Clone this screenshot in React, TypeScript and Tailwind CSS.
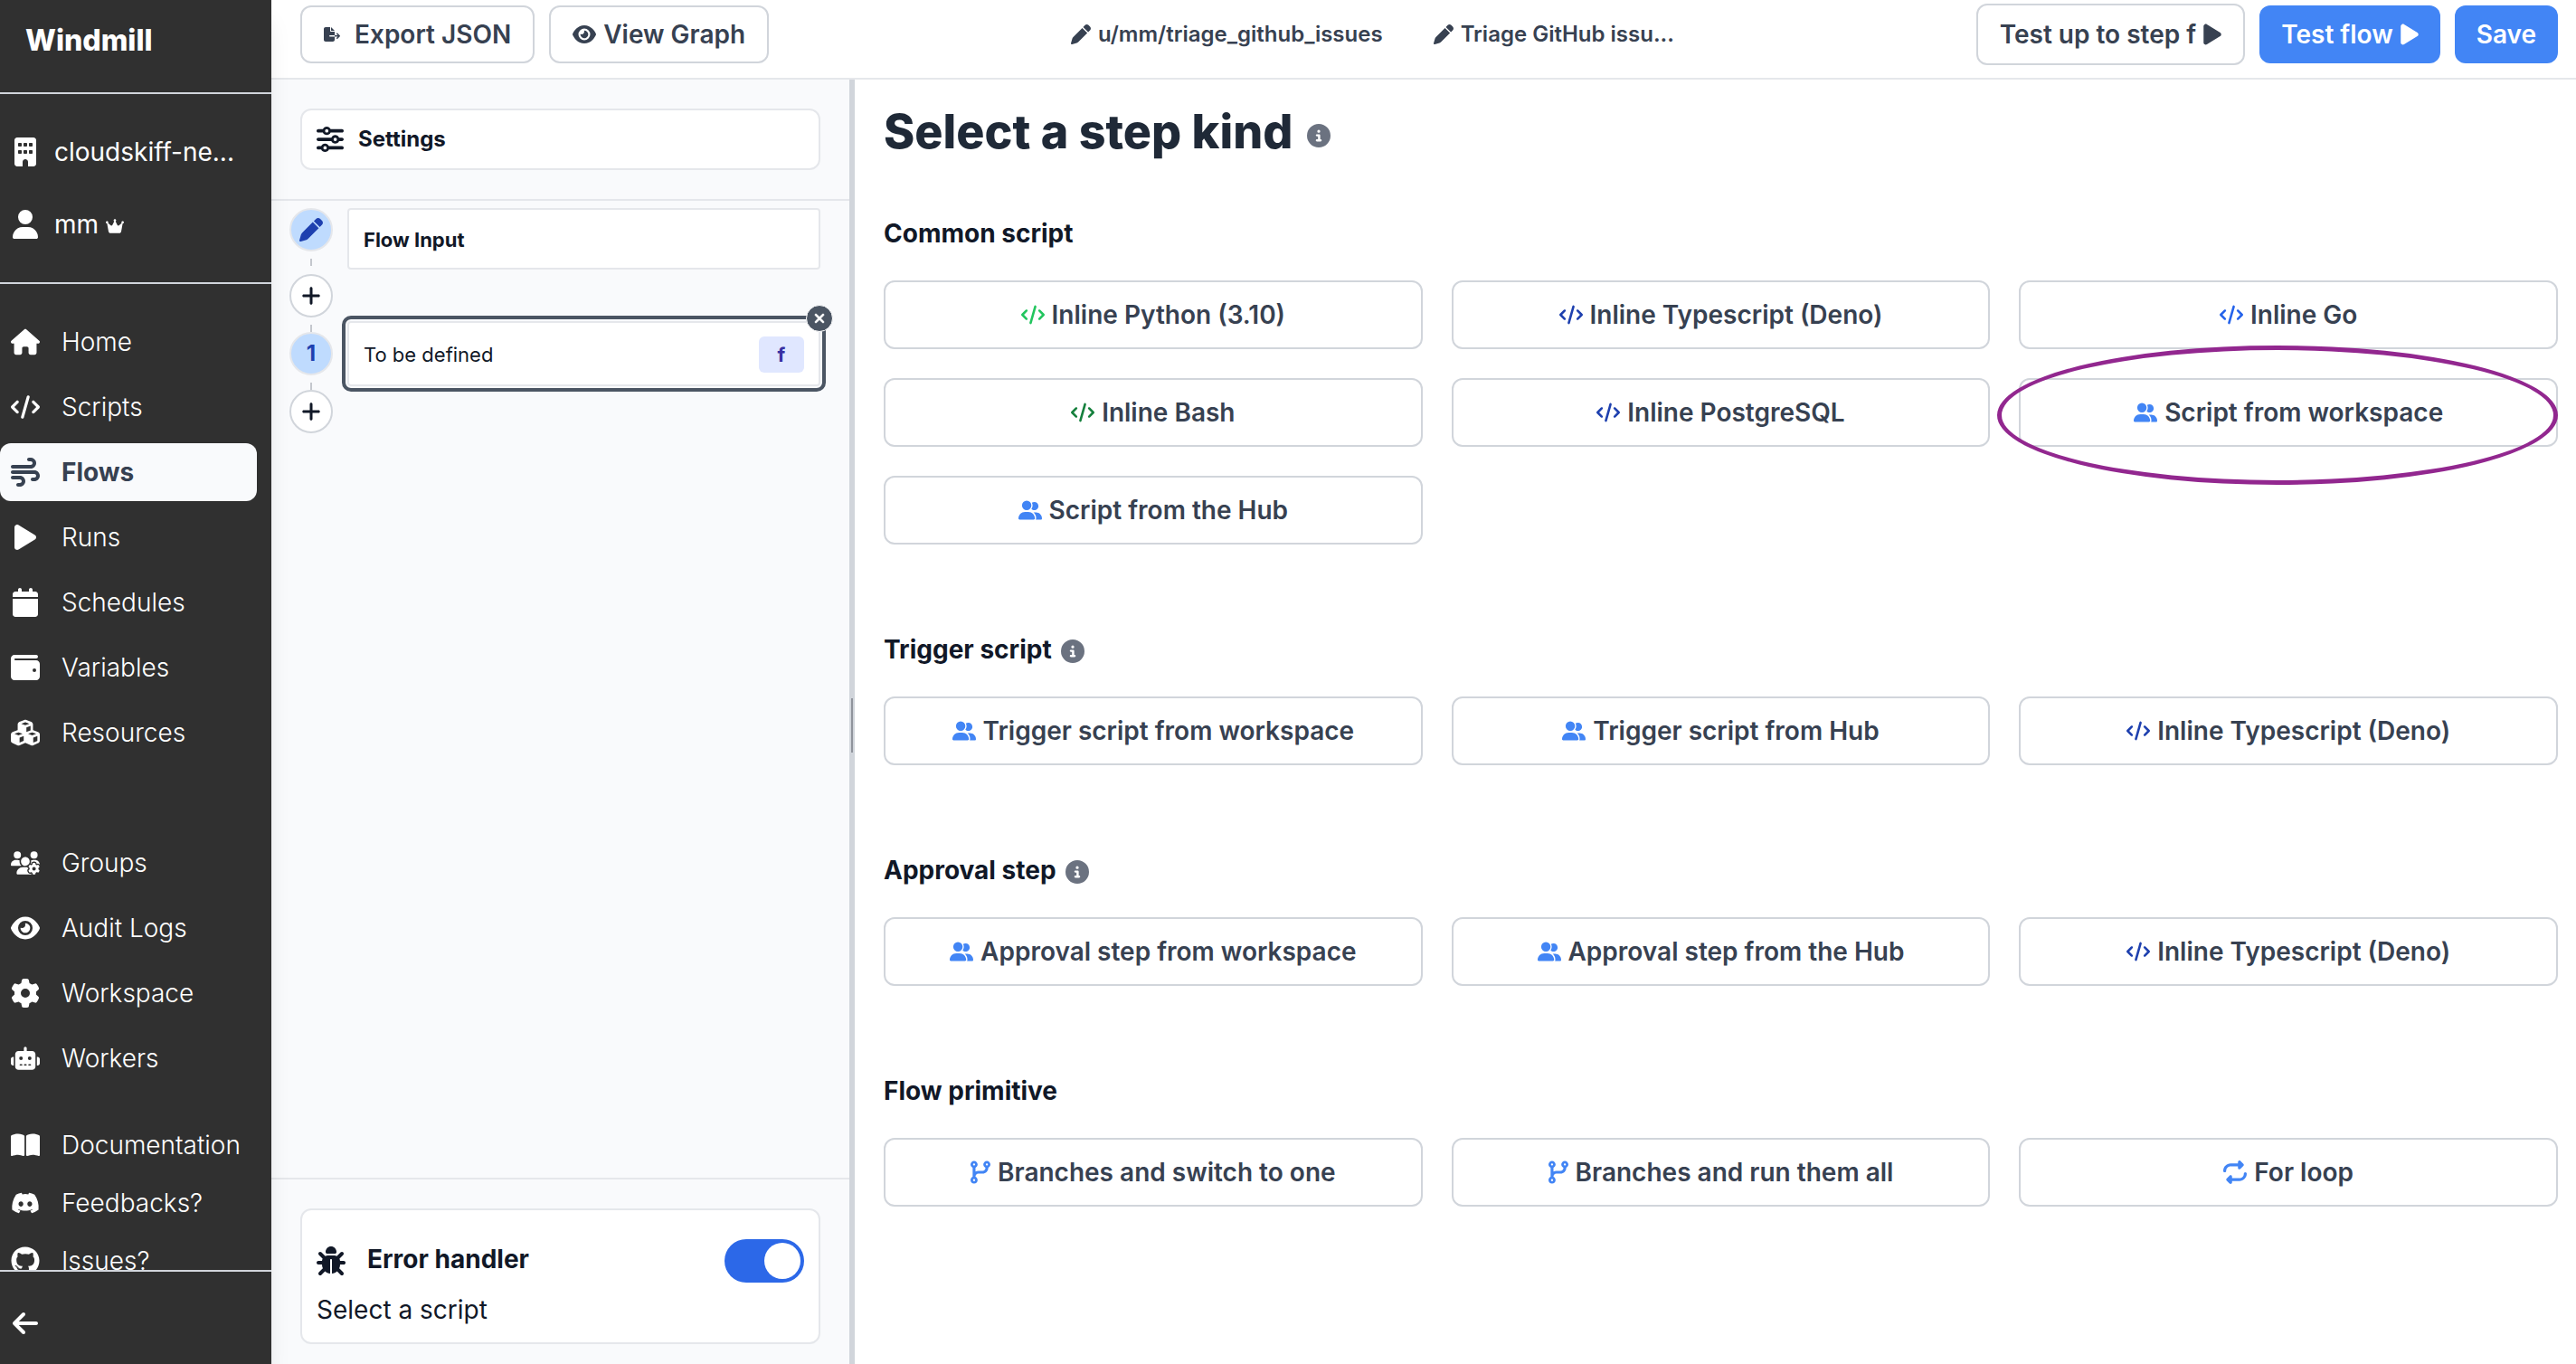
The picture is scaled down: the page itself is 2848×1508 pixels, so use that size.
import React from "react";
import type { IconType } from "react-icons";
import {
  FaArrowLeft,
  FaBookOpen,
  FaBug,
  FaBuilding,
  FaCalendar,
  FaCircleInfo,
  FaCode,
  FaCodeBranch,
  FaCrown,
  FaCubes,
  FaDiscord,
  FaEye,
  FaFileExport,
  FaGear,
  FaGithub,
  FaHouse,
  FaPen,
  FaPlay,
  FaPlus,
  FaRepeat,
  FaRobot,
  FaSliders,
  FaUser,
  FaUserGroup,
  FaUsersGear,
  FaWallet,
  FaWind,
  FaXmark,
} from "react-icons/fa6";

type NavEntry = { label: string; icon: IconType; active?: boolean };

const mainNav: NavEntry[] = [
  { label: "Home", icon: FaHouse },
  { label: "Scripts", icon: FaCode },
  { label: "Flows", icon: FaWind, active: true },
  { label: "Runs", icon: FaPlay },
  { label: "Schedules", icon: FaCalendar },
  { label: "Variables", icon: FaWallet },
  { label: "Resources", icon: FaCubes },
];

const adminNav: NavEntry[] = [
  { label: "Groups", icon: FaUsersGear },
  { label: "Audit Logs", icon: FaEye },
  { label: "Workspace", icon: FaGear },
  { label: "Workers", icon: FaRobot },
];

const helpNav: NavEntry[] = [
  { label: "Documentation", icon: FaBookOpen },
  { label: "Feedbacks?", icon: FaDiscord },
  { label: "Issues?", icon: FaGithub },
];

function NavLink({ entry }: { entry: NavEntry }) {
  const Icon = entry.icon;
  return (
    <a
      href="#"
      className={
        entry.active
          ? "flex h-16 items-center rounded-xl bg-[#f9fafc] pl-3 font-bold text-[#374151]"
          : "flex h-16 items-center pl-3 font-light text-white"
      }
    >
      <span className="flex w-8 justify-center">
        <Icon className="size-8" />
      </span>
      <span className="ml-6">{entry.label}</span>
    </a>
  );
}

function Sidebar() {
  return (
    <aside className="relative z-10 flex w-[300px] shrink-0 flex-col bg-[#303030] text-[28px] leading-10 text-white shadow-xl">
      <div className="flex h-[102px] shrink-0 items-center pb-3 pl-7 text-[32px] font-extrabold">Windmill</div>
      <div className="h-[212px] shrink-0 border-y-2 border-[#d1d5db] pt-8">
        <button className="flex h-16 items-center pl-3">
          <span className="flex w-8 justify-center">
            <FaBuilding className="size-8" />
          </span>
          <span className="ml-4">cloudskiff-ne...</span>
        </button>
        <button className="mt-4 flex h-16 items-center pl-3">
          <span className="flex w-8 justify-center">
            <FaUser className="size-8" />
          </span>
          <span className="ml-4">mm</span>
          <FaCrown className="mt-1 ml-2 size-5" />
        </button>
      </div>
      <nav className="min-h-0 flex-1 overflow-hidden pt-8">
        <div className="flex flex-col gap-2 pr-4">
          {mainNav.map((e) => (
            <NavLink key={e.label} entry={e} />
          ))}
        </div>
        <div className="mt-20 flex flex-col gap-2 pr-4">
          {adminNav.map((e) => (
            <NavLink key={e.label} entry={e} />
          ))}
        </div>
        <div className="mt-8 flex flex-col pr-4">
          {helpNav.map((e) => (
            <NavLink key={e.label} entry={e} />
          ))}
        </div>
      </nav>
      <div className="flex h-[104px] shrink-0 items-center border-t-2 border-[#d1d5db] pt-3 pl-3">
        <button aria-label="Collapse menu">
          <FaArrowLeft className="size-8" />
        </button>
      </div>
    </aside>
  );
}

const outlineButton =
  "flex items-center justify-center rounded-xl border-2 border-[#d1d5db] bg-white text-[28px] leading-10 font-semibold text-[#374151]";
const solidButton =
  "flex h-16 items-center rounded-xl bg-[#4285f5] px-6 text-[28px] leading-10 font-semibold text-white";

function TopBar() {
  return (
    <header className="flex h-[88px] shrink-0 items-start justify-between border-b-2 border-[#e5e7eb] bg-white pt-1 pr-5 pl-8">
      <div className="flex h-[68px] items-center gap-4">
        <button className={`${outlineButton} h-16 px-6`}>
          <FaFileExport className="mr-4 size-[18px]" />
          Export JSON
        </button>
        <button className={`${outlineButton} h-16 px-6`}>
          <FaEye className="mr-2 size-[26px]" />
          View Graph
        </button>
      </div>
      <div className="flex h-[68px] items-center gap-14 text-2xl font-semibold text-[#374151]">
        <button className="flex items-center gap-2">
          <FaPen className="size-[22px]" />
          u/mm/triage_github_issues
        </button>
        <button className="flex items-center gap-2">
          <FaPen className="size-[22px]" />
          Triage GitHub issu...
        </button>
      </div>
      <div className="flex items-center gap-4">
        <button className={`${outlineButton} h-[68px] px-6`}>
          Test up to step f
          <FaPlay className="ml-2 h-[26px] w-5" />
        </button>
        <button className={solidButton}>
          Test flow
          <FaPlay className="ml-2 h-[26px] w-5" />
        </button>
        <button className={solidButton}>Save</button>
      </div>
    </header>
  );
}

function Dash() {
  return <span className="h-2 w-[2px] bg-[#c4c7cd]" />;
}

function AddStep() {
  return (
    <button
      aria-label="Add step"
      className="flex size-12 items-center justify-center rounded-full border-2 border-[#d1d5db] bg-white"
    >
      <FaPlus className="size-6" />
    </button>
  );
}

function FlowPanel() {
  return (
    <section className="flex w-[639px] shrink-0 flex-col bg-[#f9fafc] text-[#111827]">
      <div className="border-b-2 border-[#e5e7eb] py-8 pr-8 pl-8">
        <button className="flex h-[68px] w-full items-center rounded-xl border-2 border-[#e5e7eb] bg-white pl-4 text-2xl font-bold">
          <FaSliders className="mr-4 size-[30px]" />
          Settings
        </button>
      </div>
      <div className="flex min-h-0 flex-1 gap-4 pt-2 pr-8 pl-5">
        <div className="flex flex-col items-center">
          <span className="flex size-12 items-center justify-center rounded-full border-2 border-[#e5e7eb] bg-[#bfdbfe] text-[#1e40af]">
            <FaPen className="size-[26px]" />
          </span>
          <span className="flex h-[25px] flex-col items-center pt-2">
            <Dash />
          </span>
          <AddStep />
          <span className="flex h-4 flex-col justify-end">
            <Dash />
          </span>
          <span className="flex size-12 items-center justify-center rounded-full border-2 border-[#e5e7eb] bg-[#bfdbfe] text-2xl font-bold text-[#1e40af]">
            1
          </span>
          <span className="flex h-4 flex-col justify-end">
            <Dash />
          </span>
          <AddStep />
        </div>
        <div className="flex flex-1 flex-col">
          <button className="flex h-[68px] items-center rounded-sm border-2 border-[#e5e7eb] bg-white pt-[2px] pl-4 text-[22px] font-bold">
            Flow Input
          </button>
          <div className="relative mt-[57px] flex h-[72px] items-center justify-between rounded-sm border-2 border-[#e5e7eb] bg-white pt-[2px] pr-4 pl-4 text-[22px] outline-4 outline-offset-2 outline-[#4b5563]">
            To be defined
            <span className="flex h-10 w-[50px] items-center justify-center rounded-md bg-[#e0e7ff] font-bold text-[#3730a3]">
              f
            </span>
            <button
              aria-label="Remove step"
              className="absolute -top-5 -right-4 flex size-[30px] items-center justify-center rounded-full border border-white bg-[#4b5563] text-white"
            >
              <FaXmark className="size-4" stroke="currentColor" strokeWidth={24} />
            </button>
          </div>
        </div>
      </div>
      <div className="border-t-2 border-[#e5e7eb] px-8 pt-8 pb-[22px]">
        <div className="h-[150px] rounded-xl border-2 border-[#e5e7eb] bg-white px-4 pt-8 text-[28px]">
          <label className="flex h-12 items-center font-bold">
            <FaBug className="mr-6 size-8" />
            <span className="flex-1 pb-1">Error handler</span>
            <input type="checkbox" defaultChecked className="peer sr-only" />
            <span className="flex h-12 w-[88px] items-center justify-end rounded-full bg-[#2c68e8] pr-1">
              <span className="size-10 rounded-full bg-white" />
            </span>
          </label>
          <p className="mt-[10px] leading-10">Select a script</p>
        </div>
      </div>
    </section>
  );
}

type Kind = { label: string; icon: IconType; tone: string; circled?: boolean };
type Group = { title: string; info?: boolean; kinds: Kind[] };

const sky = "text-[#4285f5]";
const navy = "text-[#1e40af]";

const groups: Group[] = [
  {
    title: "Common script",
    kinds: [
      { label: "Inline Python (3.10)", icon: FaCode, tone: "text-[#22c55e]" },
      { label: "Inline Typescript (Deno)", icon: FaCode, tone: navy },
      { label: "Inline Go", icon: FaCode, tone: "text-[#2563eb]" },
      { label: "Inline Bash", icon: FaCode, tone: "text-[#15803d]" },
      { label: "Inline PostgreSQL", icon: FaCode, tone: navy },
      { label: "Script from workspace", icon: FaUserGroup, tone: sky, circled: true },
      { label: "Script from the Hub", icon: FaUserGroup, tone: sky },
    ],
  },
  {
    title: "Trigger script",
    info: true,
    kinds: [
      { label: "Trigger script from workspace", icon: FaUserGroup, tone: sky },
      { label: "Trigger script from Hub", icon: FaUserGroup, tone: sky },
      { label: "Inline Typescript (Deno)", icon: FaCode, tone: navy },
    ],
  },
  {
    title: "Approval step",
    info: true,
    kinds: [
      { label: "Approval step from workspace", icon: FaUserGroup, tone: sky },
      { label: "Approval step from the Hub", icon: FaUserGroup, tone: sky },
      { label: "Inline Typescript (Deno)", icon: FaCode, tone: navy },
    ],
  },
  {
    title: "Flow primitive",
    kinds: [
      { label: "Branches and switch to one", icon: FaCodeBranch, tone: sky },
      { label: "Branches and run them all", icon: FaCodeBranch, tone: sky },
      { label: "For loop", icon: FaRepeat, tone: sky },
    ],
  },
];

function KindButton({ kind }: { kind: Kind }) {
  const Icon = kind.icon;
  return (
    <div className="relative">
      <button className={`${outlineButton} h-[76px] w-full`}>
        <Icon
          className={`mr-2 h-[26px] ${kind.icon === FaCodeBranch ? "w-[22px]" : "w-[26px]"} ${kind.tone}`}
        />
        {kind.label}
      </button>
      {kind.circled && (
        <span className="pointer-events-none absolute -top-9 right-0 -bottom-[42px] -left-6 rounded-[50%] border-[5px] border-[#92278f]" />
      )}
    </div>
  );
}

function StepPicker() {
  return (
    <main className="min-w-0 flex-1 overflow-hidden bg-white pt-[26px] pr-5 pl-8 text-[#111827]">
      <h1 className="flex h-16 items-center text-[52px] font-extrabold text-[#1f2937]">
        Select a step kind
        <FaCircleInfo className="mt-2 ml-4 size-[26px] text-[#6b7280]" />
      </h1>
      <div className="mt-[60px] flex flex-col gap-24">
        {groups.map((g) => (
          <section key={g.title}>
            <h2 className="mb-8 flex h-10 items-center text-[28px] font-bold">
              {g.title}
              {g.info && <FaCircleInfo className="mt-1 ml-[10px] size-[26px] text-[#6b7280]" />}
            </h2>
            <div className="grid grid-cols-3 gap-8">
              {g.kinds.map((k) => (
                <KindButton key={k.label} kind={k} />
              ))}
            </div>
          </section>
        ))}
      </div>
    </main>
  );
}

export default function App() {
  return (
    <div className="flex h-screen overflow-hidden bg-white font-['Inter',sans-serif]">
      <Sidebar />
      <div className="flex min-w-0 flex-1 flex-col">
        <TopBar />
        <div className="flex min-h-0 flex-1">
          <FlowPanel />
          <div className="flex w-[6px] shrink-0 items-center bg-[#d1d5db] pt-2 pl-[2px]">
            <span className="h-[60px] w-[2px] bg-[#8f939b]" />
          </div>
          <StepPicker />
        </div>
      </div>
    </div>
  );
}
